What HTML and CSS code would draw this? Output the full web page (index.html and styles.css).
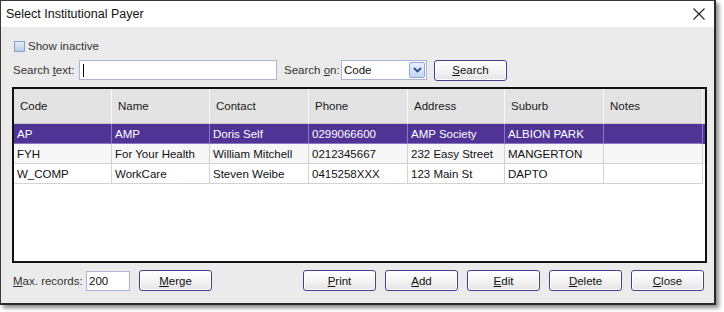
FILE: index.html
```html
<!DOCTYPE html>
<html>
<head>
<meta charset="utf-8">
<link rel="stylesheet" href="styles.css">
</head>
<body>
<div class="window">
  <div class="titlebar">
    <span class="title">Select Institutional Payer</span>
    <svg class="close-x" width="12" height="12" viewBox="0 0 12 12"><path d="M0.5 0.5 L11.5 11.5 M11.5 0.5 L0.5 11.5" stroke="#222" stroke-width="1.1" fill="none"/></svg>
  </div>
  <div class="content">
    <div class="row-check">
      <span class="checkbox"></span><span class="lbl">Show inactive</span>
    </div>
    <div class="row-search">
      <span class="lbl text-lbl">Search <u>t</u>ext:</span>
      <span class="textbox search-box"><span class="caret"></span></span>
      <span class="lbl on-lbl">Search <u>o</u>n:</span>
      <span class="combo"><span class="combo-text">Code</span><span class="combo-btn"><svg width="9" height="6" viewBox="0 0 9 6"><path d="M1 1 L4.5 4.5 L8 1" stroke="#2b4a8a" stroke-width="1.8" fill="none"/></svg></span></span>
      <span class="btn search-btn"><u>S</u>earch</span>
    </div>
    <div class="grid">
      <div class="grow head">
        <div class="c">Code</div><div class="c">Name</div><div class="c">Contact</div><div class="c">Phone</div><div class="c">Address</div><div class="c">Suburb</div><div class="c">Notes</div>
      </div>
      <div class="grow sel">
        <div class="c">AP</div><div class="c">AMP</div><div class="c">Doris Self</div><div class="c">0299066600</div><div class="c">AMP Society</div><div class="c">ALBION PARK</div><div class="c"></div>
      </div>
      <div class="grow alt">
        <div class="c">FYH</div><div class="c">For Your Health</div><div class="c">William Mitchell</div><div class="c">0212345667</div><div class="c">232 Easy Street</div><div class="c">MANGERTON</div><div class="c"></div>
      </div>
      <div class="grow">
        <div class="c">W_COMP</div><div class="c">WorkCare</div><div class="c">Steven Weibe</div><div class="c">0415258XXX</div><div class="c">123 Main St</div><div class="c">DAPTO</div><div class="c"></div>
      </div>
    </div>
    <div class="row-bottom">
      <span class="lbl max-lbl"><u>M</u>ax. records:</span>
      <span class="textbox max-box">200</span>
      <span class="btn merge-btn"><u>M</u>erge</span>
      <span class="spacer"></span>
      <span class="btn"><u>P</u>rint</span>
      <span class="btn"><u>A</u>dd</span>
      <span class="btn"><u>E</u>dit</span>
      <span class="btn"><u>D</u>elete</span>
      <span class="btn"><u>C</u>lose</span>
    </div>
  </div>
</div>
</body>
</html>
```
FILE: styles.css
```css
* { box-sizing: border-box; }
html, body { margin: 0; padding: 0; background: #ffffff; }
body {
  font-family: "Liberation Sans", "DejaVu Sans", sans-serif;
  font-size: 11.5px;
  color: #1a1a1a;
  width: 724px;
  height: 312px;
}
u { text-decoration: underline; text-underline-offset: 1px; }
.window {
  width: 716px;
  height: 305px;
  border: 1px solid #3a3a3a;
  border-right: 2px solid #2a2a2a;
  border-bottom: 2px solid #2a2a2a;
  box-shadow: 3px 3px 4px rgba(0,0,0,0.45);
  background: #ebebeb;
  display: flex;
  flex-direction: column;
}
.titlebar {
  height: 26px;
  background: #ffffff;
  display: flex;
  align-items: center;
  justify-content: space-between;
  padding: 0 9px 0 5px;
  flex: none;
}
.title { font-size: 12.5px; color: #111; }
.close-x { display: block; }
.content {
  flex: 1;
  display: flex;
  flex-direction: column;
  padding: 12px 8px 0 11px;
}
.row-check { display: flex; align-items: center; height: 14px; }
.checkbox {
  width: 11px; height: 11px;
  border: 1px solid #8aa0c8;
  background: linear-gradient(#e4ecf8, #b9cbe8);
  margin: 0 3px 0 2px;
}
.lbl { color: #333; white-space: nowrap; }
.row-search { display: flex; align-items: center; margin-top: 7px; height: 20px; }
.text-lbl { width: 67px; padding-left: 1px; }
.textbox {
  background: #fff;
  border: 1px solid #a9b4d6;
  height: 20px;
  display: flex;
  align-items: center;
}
.search-box { width: 198px; padding-left: 3px; }
.caret { width: 1px; height: 13px; background: #000; }
.on-lbl { width: 64px; padding-left: 7px; }
.combo {
  width: 86px; height: 20px;
  background: #fff; border: 1px solid #a9b4d6;
  display: flex; align-items: center; justify-content: space-between;
  padding: 0 1px 0 2px;
  color: #111;
}
.combo-btn {
  width: 16px; height: 16px;
  border: 1px solid #8fa6d6;
  border-radius: 2px;
  background: linear-gradient(#eaf1fc, #c4d5f1);
  display: flex; align-items: center; justify-content: center;
}
.combo-btn svg { display: block; }
.btn {
  width: 73px; height: 21px;
  border: 1px solid #4a3d8f;
  border-radius: 3px;
  background: linear-gradient(#ffffff 0%, #f4f4f4 50%, #e4e4e4 100%);
  display: flex; align-items: center; justify-content: center;
  color: #111;
  box-shadow: inset 0 0 0 1px #ffffff;
}
.search-btn { margin-left: 7px; }
.grid {
  margin-top: 7px;
  width: 695px;
  height: 176px;
  border: 2px solid #111;
  background: #fff;
  display: flex;
  flex-direction: column;
}
.grow { display: grid; grid-template-columns: 98px 98px 99px 99px 97px 99px 99px; height: 20px; flex: none; }
.grow .c {
  border-right: 1px solid #d3d3d3;
  border-bottom: 1px solid #d3d3d3;
  padding-left: 3px;
  display: flex; align-items: center;
  white-space: nowrap; overflow: hidden;
  color: #111;
}
.grow.head { height: 35px; background: #e3e3e3; }
.grow.head .c { padding-left: 6px; border-right: 1px solid #fafafa; border-bottom: 1px solid #c8c8c8; color: #1a1a1a; }
.grow.sel { background: #4f3496; }
.grow.sel .c { color: #fff; border-color: #8a79c0; }
.grow.alt { background: #f7f7f7; }
.row-bottom { display: flex; align-items: center; margin-top: 7px; height: 21px; }
.max-lbl { width: 74px; padding-left: 1px; }
.max-box { width: 44px; padding-left: 2px; color: #111; }
.merge-btn { margin-left: 9px; }
.spacer { flex: 1; }
.row-bottom .btn + .btn { margin-left: 9px; }
.row-bottom .btn:last-child { margin-right: 2px; }
```
